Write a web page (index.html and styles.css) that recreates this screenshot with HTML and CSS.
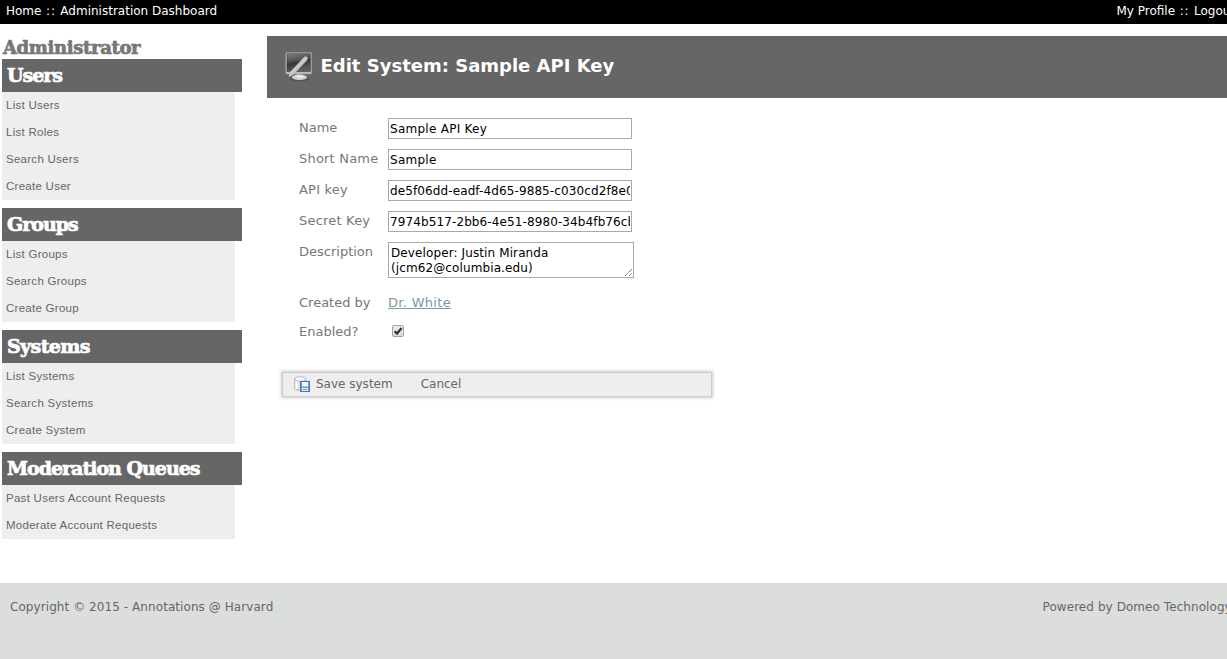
FILE: index.html
```
<!DOCTYPE html>
<html lang="en">
<head>
<meta charset="utf-8">
<title>Edit System: Sample API Key</title>
<link rel="stylesheet" href="styles.css">
</head>
<body>
<div class="page">
  <header class="topbar">
    <div><a>Home</a><span class="sep"> :: </span><a>Administration Dashboard</a></div>
    <div><a>My Profile</a><span class="sep"> :: </span><a>Logout</a></div>
  </header>
  <div class="columns">
    <nav class="sidebar">
      <div class="role">Administrator</div>
      <section class="group">
        <h2 class="users">Users</h2>
        <ul><li>List Users</li><li>List Roles</li><li>Search Users</li><li>Create User</li></ul>
      </section>
      <section class="group">
        <h2 class="groups">Groups</h2>
        <ul><li>List Groups</li><li>Search Groups</li><li>Create Group</li></ul>
      </section>
      <section class="group">
        <h2 class="systems">Systems</h2>
        <ul><li>List Systems</li><li>Search Systems</li><li>Create System</li></ul>
      </section>
      <section class="group">
        <h2 class="queues">Moderation Queues</h2>
        <ul><li>Past Users Account Requests</li><li>Moderate Account Requests</li></ul>
      </section>
    </nav>
    <main class="content">
      <div class="title">
        <svg class="monitor" width="28" height="30" viewBox="0 0 28 30">
          <defs>
            <linearGradient id="screen" x1="0" y1="0" x2=".3" y2="1"><stop offset="0" stop-color="#808080"/><stop offset=".5" stop-color="#4c4c4c"/><stop offset=".55" stop-color="#343434"/><stop offset="1" stop-color="#5c5c5c"/></linearGradient>
            <linearGradient id="pen" x1="0" y1="0" x2="1" y2="1"><stop offset="0" stop-color="#e6eaec"/><stop offset="1" stop-color="#a4adb3"/></linearGradient>
          </defs>
          <ellipse cx="14" cy="27" rx="9.500" ry="2.500" fill="#494949" opacity=".6"/>
          <path d="M11 21h6l1 4h-8z" fill="#a5a5a5"/>
          <ellipse cx="14.500" cy="25.300" rx="7.500" ry="2.700" fill="#d4d4d4"/>
          <ellipse cx="15" cy="24.500" rx="3.500" ry="1" fill="#f2f2f2"/>
          <rect x=".7" y=".5" width="26" height="21.500" rx=".8" fill="#bebebe" stroke="#929292" stroke-width=".6"/>
          <rect x="2" y="1.800" width="23.300" height="17.700" fill="url(#screen)" stroke="#333" stroke-width=".5"/>
          <path d="M18.800 5.400q2-1.800 3.300-.3 1.300 1.500-.3 3.300L8 22.900l-4.200 1.800 1-4.200z" fill="url(#pen)" stroke="#9ca6ac" stroke-width=".4"/>
        </svg>
        <h1>Edit System: Sample API Key</h1>
      </div>
      <form class="form">
        <label for="name">Name</label><input id="name" class="field name" type="text" value="Sample API Key">
        <label class="wide" for="short">Short Name</label><input id="short" class="field name" type="text" value="Sample">
        <label class="wide" for="key">API key</label><input id="key" class="field" type="text" value="de5f06dd-eadf-4d65-9885-c030cd2f8e0a">
        <label class="wide" for="secret">Secret Key</label><input id="secret" class="field" type="text" value="7974b517-2bb6-4e51-8980-34b4fb76cb1d">
        <label for="desc">Description</label>
        <div class="area"><textarea id="desc">Developer: Justin Miranda (jcm62@columbia.edu)</textarea><svg class="grip" width="9" height="9" viewBox="0 0 9 9"><path d="M1 8 8 1M5 8 8 5" stroke="#555" stroke-width="1" stroke-dasharray="1.3 .5"/></svg></div>
        <label>Created by</label><a class="author">Dr. White</a>
        <label>Enabled?</label>
        <svg class="check" width="12" height="12" viewBox="0 0 12 12"><defs><linearGradient id="box" x2="0" y2="1"><stop stop-color="#eee"/><stop offset="1" stop-color="#d9d9d9"/></linearGradient></defs><rect x=".5" y=".5" width="11" height="11" rx="1.500" fill="url(#box)" stroke="#a2a2a2"/><path d="M2.700 6.200 5 8.500 9.600 3" fill="none" stroke="#333" stroke-width="2.200"/></svg>
      </form>
      <div class="actions">
        <svg width="16" height="16" viewBox="0 0 16 16">
          <path d="M.7 3v9.500C1 15 11.500 15 12 12.500V3z" fill="#e2e2e2" stroke="#aaa" stroke-width=".8"/>
          <path d="M2.500 5v8" stroke="#fff" stroke-width="2"/>
          <ellipse cx="6.300" cy="3" rx="5.600" ry="2.200" fill="#fafafa" stroke="#aaa" stroke-width=".8"/>
          <rect x="6.500" y="5.500" width="9" height="10" fill="#6b98e8" stroke="#4a74bd"/>
          <rect x="8" y="6" width="6" height="4.500" fill="#f3f7ff"/>
          <rect x="8" y="12" width="6" height="3" fill="#e5f5da"/><path d="M9 13.500h4" stroke="#68b846"/>
        </svg>
        <span class="save">Save system</span><span>Cancel</span>
      </div>
    </main>
  </div>
  <footer class="footer"><span>Copyright © 2015 - Annotations @ Harvard</span><span>Powered by Domeo Technology</span></footer>
</div>
</body>
</html>
```
FILE: styles.css
```
* { box-sizing: border-box; }
html, body { margin: 0; overflow: hidden; background: #fff; }
body { font-family: "DejaVu Sans", Verdana, sans-serif; font-size: 12px; color: #666; }
.page { width: 1239px; height: 659px; display: flex; flex-direction: column; }
.topbar { height: 24px; padding: 0 0 2px 6px; background: #000; color: #fff; display: flex; justify-content: space-between; align-items: center; }
.topbar div:last-child { width: 122.5px; white-space: nowrap; }
.sep { letter-spacing: .8px; }
.columns { display: flex; height: 559px; padding-left: 2px; }
.sidebar { width: 240px; margin-right: 25px; padding-top: 12px; }
.role, .group h2 { font-family: "DejaVu Serif", serif; font-weight: bold; white-space: nowrap; -webkit-text-stroke: .7px currentColor; }
.role { height: 23px; line-height: 24px; padding-left: 1px; font-size: 18px; color: #777; letter-spacing: -.35px; }
.group { margin-bottom: 8px; }
.group h2 { margin: 0; height: 33px; line-height: 33px; padding-left: 5px; background: #666; color: #fff; font-size: 19px; letter-spacing: -1px; }
.group h2.systems { letter-spacing: -.6px; }
.group ul { list-style: none; margin: 0; padding: 0 0 0 4px; width: 233px; background: #eee; font: 11.5px "Liberation Sans", Arial, sans-serif; letter-spacing: .27px; }
.group li { height: 27px; line-height: 27px; }
.content { width: 972px; padding-top: 12px; }
.title { height: 62px; padding: 0 0 0 17.5px; background: #666; display: flex; align-items: center; }
.monitor { margin: 0 8px 0 0; }
.title h1 { margin: 0 0 4px; font-size: 18px; color: #fff; }
.form { margin: 20px 0 0 32px; display: grid; grid-template-columns: 89px 246px; grid-template-rows: 31px 31px 31px 31px 51px 29px 31px; align-items: start; font-size: 13px; color: #777; }
.form label { line-height: 19px; }
.form .wide { letter-spacing: .2px; }
.field, .area textarea { font: 12px "DejaVu Sans", Verdana, sans-serif; letter-spacing: .11px; color: #000; background: #fff; border: 1px solid #a9a9a9; border-radius: 0; outline: 0; }
.field { width: 244px; height: 21px; padding: 1px; }
.field.name { letter-spacing: .27px; }
.area { position: relative; height: 36px; }
.area textarea { display: block; width: 246px; height: 36px; padding: 3px 2px 1px; line-height: 15px; resize: none; overflow: hidden; }
.grip { position: absolute; right: 1px; bottom: 1px; }
.author { line-height: 19px; color: #7b98a7; text-decoration: underline; justify-self: start; letter-spacing: .3px; }
.check { margin: 3px 0 0 4px; }
.actions { width: 430px; height: 25px; margin: 19px 0 0 15px; padding: 0 0 1px 11px; display: flex; align-items: center; background: #eee; border: 1px solid #ccc; box-shadow: 0 0 3px 1px #ccc; }
.save { margin: 0 28px 0 6px; }
.footer { height: 76px; background: #dcdedd; padding: 17px 10px 0; display: flex; justify-content: space-between; letter-spacing: .07px; }
.footer span:last-child { width: 186.5px; white-space: nowrap; }
```
